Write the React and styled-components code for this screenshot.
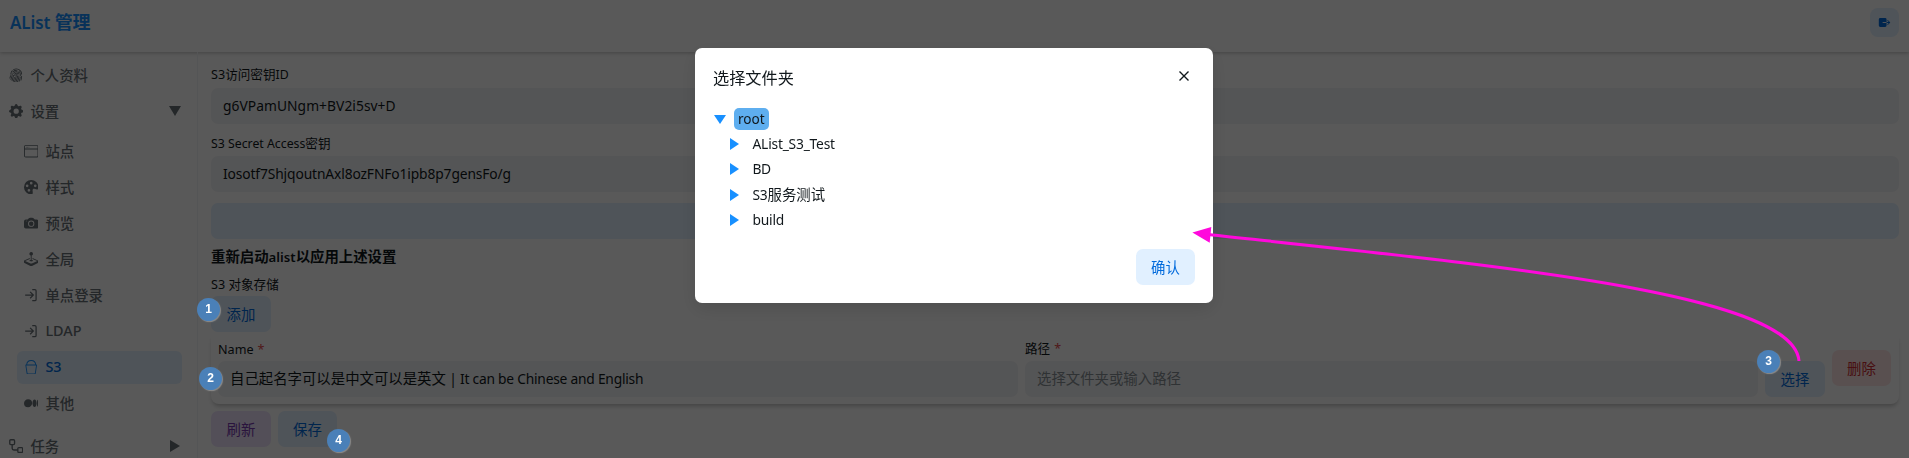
import React from "react";
import styled, { createGlobalStyle } from "styled-components";
import { BsFingerprint, BsGearFill, BsWindow, BsPaletteFill, BsCameraFill, BsJoystick, BsBucket, BsMedium } from "react-icons/bs";
import { IoExit } from "react-icons/io5";

const Global = createGlobalStyle`
  *, *::before, *::after { box-sizing: border-box; }
  html, body { margin: 0; padding: 0; overflow: hidden; }
  body {
    font-family: "Noto Sans", "Noto Sans CJK SC", sans-serif;
    font-size: 14.4px;
    color: #11181c;
    background: #fff;
  }
  button { font: inherit; border: 0; outline: 0; }
`;

const Page = styled.div`
  height: 458px;
  overflow: hidden;
  display: flex;
  flex-direction: column;
`;

const Header = styled.header`
  flex: none;
  height: 52px;
  padding: 8px 10px 0;
  display: flex;
  justify-content: space-between;
  align-items: flex-start;
  box-shadow: 0 1px 4px rgba(0, 0, 0, 0.25);
`;

const Brand = styled.h1`
  margin: 0;
  font-size: 18px;
  line-height: 29px;
  font-weight: 600;
  color: #1890ff;
`;

const Latin = styled.span`
  font-size: ${(p) => p.$size || 13.8}px;
  letter-spacing: ${(p) => p.$track || 0}px;
  white-space: pre;
`;

const LogoutButton = styled.button`
  width: 29px;
  height: 29px;
  padding: 0;
  display: grid;
  place-items: center;
  border-radius: 8px;
  color: #006adc;
  background: #e1f0ff;
  svg { width: 13px; height: 13px; }
`;

const Body = styled.div`
  flex: 1;
  min-height: 0;
  display: flex;
`;

const Sidebar = styled.nav`
  flex: none;
  width: 198px;
  padding: 6.5px 10px 0 2px;
  border-right: 1px solid #f1f3f5;
  display: flex;
  flex-direction: column;
  gap: 3px;
`;

const SubMenu = styled.div`
  margin: 4px 5px 7px 15px;
  display: flex;
  flex-direction: column;
  gap: 3px;
`;

const MenuItem = styled.div`
  flex: none;
  height: 33px;
  padding: 0 7px;
  display: flex;
  align-items: center;
  gap: 7px;
  border-radius: 6px;
  font-weight: 500;
  color: ${(p) => (p.$active ? "#006adc" : "#687076")};
  background: ${(p) => (p.$active ? "#e1f0ff" : "transparent")};
  svg {
    flex: none;
    width: 14.4px;
    height: 14.4px;
    color: ${(p) => (p.$active ? "#1890ff" : "inherit")};
  }
`;

const ItemName = styled.span`
  margin-bottom: 2px;
`;

const Caret = styled.i`
  margin-left: auto;
  border-style: solid;
  ${(p) =>
    p.$open
      ? "border-width: 10px 6.2px 0; margin-right: -1px;"
      : "border-width: 6.2px 0 6.2px 10px;"}
  border-color: transparent;
  ${(p) => (p.$open ? "border-top-color" : "border-left-color")}: currentColor;
`;

const Main = styled.main`
  flex: 1;
  min-width: 0;
  padding: 13px 10px 0 13px;
  display: flex;
  flex-direction: column;
`;

const FieldLabel = styled.label`
  height: ${(p) => p.$height || 22}px;
  line-height: ${(p) => p.$line || 19}px;
  font-size: 12.6px;
`;

const Required = styled.span`
  margin-left: 4px;
  color: #e5484d;
`;

const TextBox = styled.div`
  flex: 1 0 36px;
  min-width: 0;
  height: 36px;
  padding: 0 12px;
  line-height: 36px;
  border-radius: 7px;
  white-space: pre;
  color: ${(p) => (p.$hint ? "#889096" : "#11181c")};
  background: #f1f3f5;
`;

const Field = styled.div`
  display: flex;
  flex-direction: column;
  flex: ${(p) => p.$grow || "none"};
  margin-bottom: ${(p) => p.$gap || 0}px;
`;

const tones = {
  info: ["#006adc", "#e1f0ff"],
  danger: ["#cd2b31", "#ffe5e5"],
  accent: ["#793aaf", "#ede2fc"],
};

const Button = styled.button`
  flex: none;
  width: ${(p) => p.$width || 60}px;
  height: 36px;
  padding: 0 0 2px;
  border-radius: 7px;
  color: ${(p) => tones[p.$tone || "info"][0]};
  background: ${(p) => tones[p.$tone || "info"][1]};
`;

const WideBar = styled.div`
  height: 36px;
  border-radius: 7px;
  background: #e1f0ff;
`;

const Notice = styled.h2`
  height: 24px;
  margin: 6px 0;
  line-height: 24px;
  font-size: 14.4px;
  font-weight: 600;
`;

const BucketCard = styled.section`
  height: 72px;
  padding: 7px 8px 7px 7px;
  display: flex;
  align-items: center;
  gap: 7px;
  border-radius: 8px;
  box-shadow: 0 4px 5px -2px rgba(0, 0, 0, 0.16), 0 3px 4px -1px rgba(0, 0, 0, 0.1);
`;

const PathRow = styled.div`
  display: flex;
  gap: 7px;
`;

const Actions = styled.div`
  margin-top: 7px;
  display: flex;
  gap: 7px;
`;

const Backdrop = styled.div`
  position: fixed;
  inset: 0;
  padding: 48px 1px 0 0;
  display: flex;
  justify-content: center;
  align-items: flex-start;
  background: rgba(0, 0, 0, 0.65);
`;

const Dialog = styled.div`
  width: 518px;
  height: 255px;
  padding: 16px 18px;
  display: flex;
  flex-direction: column;
  border-radius: 7px;
  background: #fff;
  box-shadow: 0 6px 18px rgba(0, 0, 0, 0.12);
`;

const DialogHeader = styled.div`
  height: 44px;
  display: flex;
  justify-content: space-between;
  font-size: 16.2px;
  line-height: 28px;
  svg { margin: 7px 6px 0 0; }
`;

const Tree = styled.div`
  flex: 1;
  display: flex;
  flex-direction: column;
`;

const TreeRow = styled.div`
  height: ${(p) => (p.$nested ? 25.3 : 22)}px;
  margin-bottom: ${(p) => (p.$nested ? 0 : 1.5)}px;
  padding-left: ${(p) => (p.$nested ? 17 : 1)}px;
  display: flex;
  align-items: center;
  gap: ${(p) => (p.$nested ? 13.5 : 8)}px;
  svg { flex: none; }
`;

const TreeName = styled.span`
  height: 22px;
  padding: ${(p) => (p.$selected ? "0 4px" : 0)};
  line-height: 22px;
  border-radius: 5px;
  background: ${(p) => (p.$selected ? "#5eaeef" : "none")};
`;

const DialogFooter = styled.div`
  display: flex;
  justify-content: flex-end;
  padding-bottom: 2px;
`;

const StepBadge = styled.span`
  position: fixed;
  left: ${(p) => p.$x}px;
  top: ${(p) => p.$y}px;
  width: 23px;
  height: 23px;
  border-radius: 50%;
  font: bold 12px/22px "Liberation Sans", sans-serif;
  text-align: center;
  color: #fff;
  background: #4a80b8;
  box-shadow: 1px 1px 1px #8a8a8a;
`;

const Pointer = styled.svg`
  position: fixed;
  inset: 0;
  pointer-events: none;
`;

function LoginIcon() {
  return (
    <svg viewBox="0 0 15 15" fill="none" stroke="currentColor" strokeWidth="1.3">
      <path d="M8.6 1.6h2.7q1.3 0 1.3 1.3v9q0 1.3-1.3 1.3H8.6" />
      <path d="M1.2 7.4h8.4M6.4 4.1l3.3 3.3-3.3 3.3" />
    </svg>
  );
}

function WorkflowIcon() {
  return (
    <svg viewBox="0 0 15 15" fill="none" stroke="currentColor" strokeWidth="1.4">
      <rect x=".8" y=".8" width="5" height="5" rx="1" />
      <rect x="9.2" y="9" width="5" height="5" rx="1" />
      <path d="M3.3 5.8v3.9q0 1.8 1.8 1.8h4.1" />
    </svg>
  );
}

const subItems = [
  ["站点", BsWindow],
  ["样式", BsPaletteFill],
  ["预览", BsCameraFill],
  ["全局", BsJoystick],
  ["单点登录", LoginIcon],
  ["LDAP", LoginIcon],
  ["S3", BsBucket],
  ["其他", BsMedium],
];

const folders = [
  ["AList_S3_Test", "", -0.2],
  ["BD", "", -0.4],
  ["S3", "服务测试", -0.2],
  ["build", "", -0.2],
];

const steps = [
  [1, 197, 298],
  [2, 199, 367],
  [3, 1757, 350],
  [4, 327, 429],
];

function Navigation() {
  return (
    <Sidebar>
      <MenuItem><BsFingerprint /><ItemName>个人资料</ItemName></MenuItem>
      <MenuItem><BsGearFill /><ItemName>设置</ItemName><Caret $open /></MenuItem>
      <SubMenu>
        {subItems.map(([name, Icon]) => (
          <MenuItem key={name} $active={name === "S3"}>
            <Icon /><ItemName>{name}</ItemName>
          </MenuItem>
        ))}
      </SubMenu>
      <MenuItem><WorkflowIcon /><ItemName>任务</ItemName><Caret /></MenuItem>
    </Sidebar>
  );
}

function FolderDialog() {
  return (
    <Backdrop>
      <Dialog role="dialog">
        <DialogHeader>
          选择文件夹
          <svg width="10" height="10" viewBox="0 0 10 10" stroke="#11181c" strokeWidth="1.4">
            <path d="M.5 .5 9.5 9.5M9.5 .5 .5 9.5" />
          </svg>
        </DialogHeader>
        <Tree>
          <TreeRow>
            <svg width="12" height="9" viewBox="0 0 12 9" fill="#1890ff"><path d="M0 0h12L6 9z" /></svg>
            <TreeName $selected><Latin $size={13.6}>root</Latin></TreeName>
          </TreeRow>
          {folders.map(([latin, han, track]) => (
            <TreeRow key={latin} $nested>
              <svg width="9" height="12" viewBox="0 0 9 12" fill="#1890ff"><path d="M0 0v12l9-6z" /></svg>
              <TreeName><Latin $track={track}>{latin}</Latin>{han}</TreeName>
            </TreeRow>
          ))}
        </Tree>
        <DialogFooter><Button $width={59}>确认</Button></DialogFooter>
      </Dialog>
    </Backdrop>
  );
}

export default function App() {
  return (
    <>
      <Global />
      <Page>
        <Header>
          <Brand><Latin $size={17} $track={-0.1}>AList </Latin>管理</Brand>
          <LogoutButton><IoExit /></LogoutButton>
        </Header>
        <Body>
          <Navigation />
          <Main>
            <Field $gap={10}>
              <FieldLabel $height={23} $line={20}><Latin $size={12.6}>S3</Latin>访问密钥<Latin $size={12.3}>ID</Latin></FieldLabel>
              <TextBox><Latin $track={0.05}>g6VPamUNgm+BV2i5sv+D</Latin></TextBox>
            </Field>
            <Field $gap={11}>
              <FieldLabel><Latin $size={12.3}>S3 Secret Access</Latin>密钥</FieldLabel>
              <TextBox><Latin $track={-0.12}>Iosotf7ShjqoutnAxl8ozFNFo1ipb8p7gensFo/g</Latin></TextBox>
            </Field>
            <WideBar />
            <Notice>重新启动<Latin $size={13.2}>alist</Latin>以应用上述设置</Notice>
            <FieldLabel $height={21}>S3 对象存储</FieldLabel>
            <Button>添加</Button>
            <BucketCard>
              <Field $grow="1 1 0">
                <FieldLabel $line={21}>Name<Required>*</Required></FieldLabel>
                <TextBox>自己起名字可以是中文可以是英文<Latin $track={-0.23}> | It can be Chinese and English</Latin></TextBox>
              </Field>
              <Field $grow="0 0 800px">
                <FieldLabel>路径<Required>*</Required></FieldLabel>
                <PathRow>
                  <TextBox $hint>选择文件夹或输入路径</TextBox>
                  <Button>选择</Button>
                </PathRow>
              </Field>
              <Button $tone="danger" $width={59}>删除</Button>
            </BucketCard>
            <Actions>
              <Button $tone="accent">刷新</Button>
              <Button $width={59}>保存</Button>
            </Actions>
          </Main>
        </Body>
      </Page>
      <FolderDialog />
      <Pointer width="1909" height="458" viewBox="0 0 1909 458">
        <path d="M1799 361C1794 293 1500 266 1208 234.5" fill="none" stroke="#ff08dc" strokeWidth="3" />
        <path d="M1192.4 232.6 1211.3 227 1209.7 242.7z" fill="#ff08dc" />
      </Pointer>
      {steps.map(([n, x, y]) => (
        <StepBadge key={n} $x={x} $y={y}>{n}</StepBadge>
      ))}
    </>
  );
}
